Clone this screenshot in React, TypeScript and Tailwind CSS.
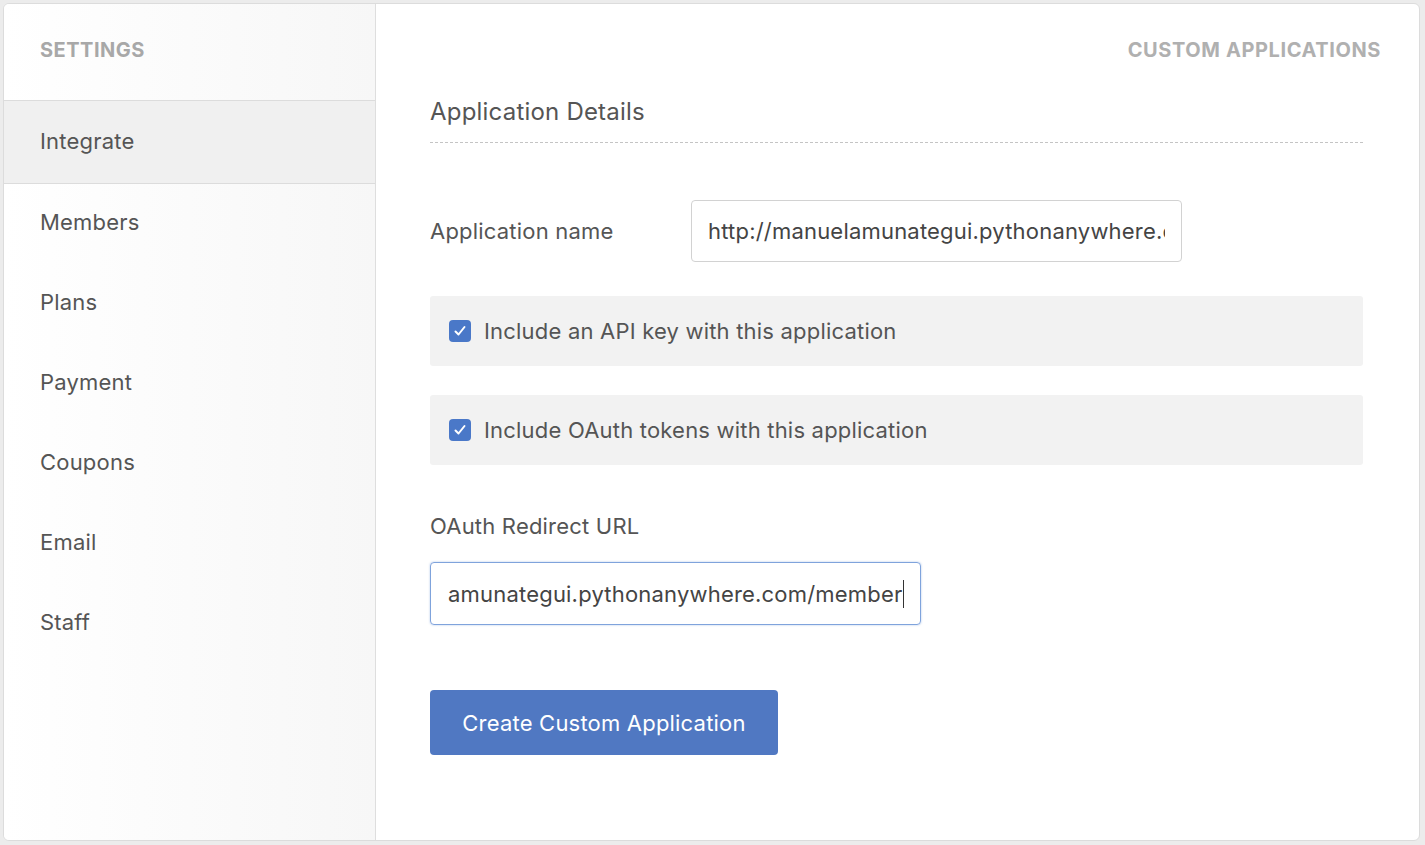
import React from "react";

const navItems = ["Integrate", "Members", "Plans", "Payment", "Coupons", "Email", "Staff"];

const CheckRow = ({ label }: { label: string }) => (
  <div className="flex items-center h-[70px] bg-[#f2f2f2] rounded-[3px] px-[19px] gap-[13px]">
    <span className="w-[22px] h-[22px] rounded-[4px] bg-[#4a78c8] flex items-center justify-center">
      <svg width="14" height="14" viewBox="0 0 14 14" fill="none">
        <path d="M2.5 7.5 L5.5 10.5 L11.5 3" stroke="white" strokeWidth="2" strokeLinecap="round" strokeLinejoin="round" />
      </svg>
    </span>
    <span className="text-[22px] leading-[30px] tracking-[0.2px] text-[#555]">{label}</span>
  </div>
);

const App = () => {
  return (
    <div className="w-[1425px] h-[845px] bg-[#ececec] p-[3px] pb-[4px] pr-[5px] font-['Inter',sans-serif]">
      <div className="flex h-full bg-white border border-[#dcdcdc] rounded-[6px] overflow-hidden">
        <aside className="w-[372px] shrink-0 bg-gradient-to-r from-white to-[#f7f7f7] border-r border-[#dedede] flex flex-col">
          <div className="h-[97px] flex items-center px-[36px] pb-[4px] border-b border-[#dcdcdc]">
            <span className="text-[20px] leading-[24px] tracking-[0.5px] font-bold text-[#a8a8a8]">SETTINGS</span>
          </div>
          {navItems.map((item, i) => (
            <div
              key={item}
              className={
                i === 0
                  ? "h-[83px] flex items-center px-[36px] pb-[3px] bg-[#f0f0f0] border-b border-[#dcdcdc] text-[22px] leading-[30px] tracking-[0.2px] text-[#555]"
                  : "h-[80px] flex items-center px-[36px] pb-[4px] text-[22px] leading-[30px] tracking-[0.2px] text-[#555]"
              }
            >
              {item}
            </div>
          ))}
        </aside>
        <main className="flex-1 pl-[54px] pr-[56px]">
          <div className="h-[92px] flex items-center justify-end -mr-[18px]">
            <span className="text-[20px] leading-[24px] tracking-[0.6px] font-bold text-[#b0b0b0]">CUSTOM APPLICATIONS</span>
          </div>
          <h2 className="pt-px text-[24px] leading-[30px] tracking-[0.2px] text-[#555] pb-[15px] border-b border-dashed border-[#c4c4c4]">
            Application Details
          </h2>
          <div className="flex items-center mt-[57px]">
            <label className="w-[261px] text-[22px] leading-[30px] tracking-[0.2px] text-[#555]">Application name</label>
            <div className="w-[491px] h-[62px] border border-[#d2d2d2] rounded-[4px] flex items-center px-[16px]">
              <div className="overflow-hidden whitespace-nowrap text-[22px] leading-[28px] tracking-[0.2px] text-[#444]">
                http://manuelamunategui.pythonanywhere.com/members
              </div>
            </div>
          </div>
          <div className="flex flex-col gap-[29px] mt-[34px]">
            <CheckRow label="Include an API key with this application" />
            <CheckRow label="Include OAuth tokens with this application" />
          </div>
          <div className="mt-[46px] text-[22px] leading-[30px] tracking-[0.2px] text-[#555]">OAuth Redirect URL</div>
          <div className="mt-[21px] w-[491px] h-[63px] border border-[#7fa3dc] rounded-[4px] shadow-[0_0_2px_rgba(80,130,210,0.5)] flex items-center px-[17px] overflow-hidden whitespace-nowrap text-[22px] leading-[28px] tracking-[0.2px] text-[#444]">
            amunategui.pythonanywhere.com/member<span className="inline-block w-px h-[28px] bg-[#333]" />
          </div>
          <button className="mt-[65px] w-[348px] h-[65px] bg-[#5078c2] rounded-[4px] text-white text-[22px] leading-[30px] tracking-[0.2px]">
            Create Custom Application
          </button>
        </main>
      </div>
    </div>
  );
};

export default App;
